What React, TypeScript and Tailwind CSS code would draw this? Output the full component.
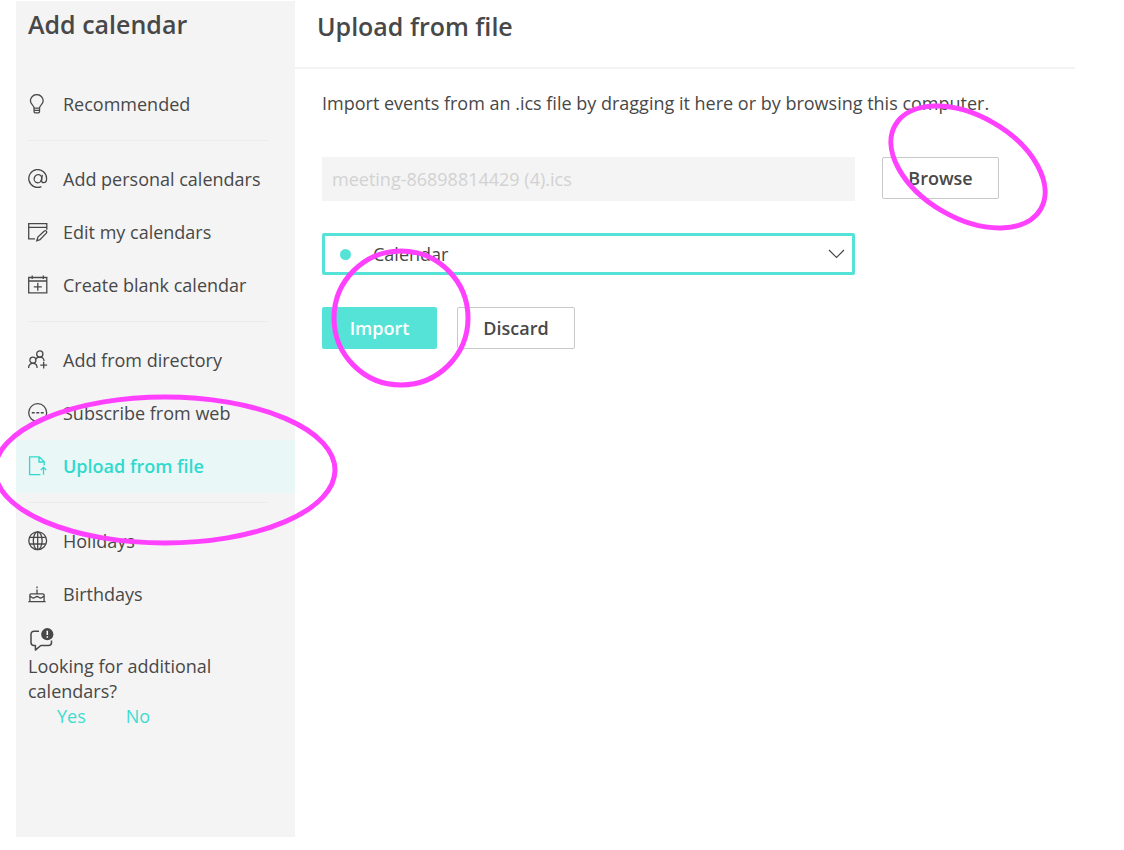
import React, { useState } from 'react';

type NavItem = { id: string; label: string; icon: React.ReactNode };

const Icon: React.FC<{ children: React.ReactNode }> = ({ children }) => (
  <svg className="w-5 h-5 shrink-0 mb-[2px]" viewBox="0 0 20 20" fill="none" stroke="currentColor" strokeWidth="1.3" aria-hidden="true">
    {children}
  </svg>
);

const groups: NavItem[][] = [
  [
    {
      id: 'recommended',
      label: 'Recommended',
      icon: (
        <Icon>
          <path d="M6.1 14.2C6.1 11.2 2.4 10.4 2.4 6.8a6.4 6.2 0 0 1 12.8 0c0 3.6-3.7 4.4-3.7 7.4z" />
          <path d="M6.1 14.2v3.6a1 1 0 0 0 1 1h3.4a1 1 0 0 0 1-1v-3.6M6.1 16.4h5.4" />
        </Icon>
      ),
    },
  ],
  [
    {
      id: 'personal',
      label: 'Add personal calendars',
      icon: (
        <Icon>
          <path d="M13.4 17.6A8.9 8.9 0 1 1 18.6 9.4c0 2.7-1.2 4.2-2.9 4.2-1.5 0-2.3-.9-2.1-2.4l.7-5.4" />
          <ellipse cx="9.9" cy="9.7" rx="3.7" ry="4.1" transform="rotate(15 9.9 9.7)" />
        </Icon>
      ),
    },
    {
      id: 'edit',
      label: 'Edit my calendars',
      icon: (
        <Icon>
          <path d="M7 16.9H.7V1.7h18.1v6M.7 5.4h18.1" />
          <path d="M8.8 18.8l1.1-3.8 6.4-6c1.5-1.1 3.2.7 2 2.1L12 17.6z" />
        </Icon>
      ),
    },
    {
      id: 'blank',
      label: 'Create blank calendar',
      icon: (
        <Icon>
          <path d="M.7 2.5h18.1v15.4H.7zM.7 6h18.1M4.2 .5v3.4M15.3 .5v3.4M9.8 7.8v8M5.8 11.8h8" />
        </Icon>
      ),
    },
  ],
  [
    {
      id: 'directory',
      label: 'Add from directory',
      icon: (
        <Icon>
          <circle cx="11.8" cy="4" r="3.1" />
          <circle cx="4.9" cy="10.2" r="3" />
          <path d="M.6 17.9c0-2.8 1.9-4.6 4.3-4.6s4.2 1.8 4.2 4.6M7.6 9.2c.8-1.3 2.3-2.1 4.2-2.1 2.4 0 4 1.6 4.3 3.9M15.7 11.8v6.8M12.3 15.2h6.8" />
        </Icon>
      ),
    },
    {
      id: 'subscribe',
      label: 'Subscribe from web',
      icon: (
        <Icon>
          <circle cx="9.7" cy="9.7" r="9" />
          <path d="M3.8 9.7h2.9M8.3 9.7h2.9M12.8 9.7h2.9" strokeWidth="1.6" />
        </Icon>
      ),
    },
    {
      id: 'upload',
      label: 'Upload from file',
      icon: (
        <Icon>
          <path d="M12.4 18.6H1.6V.8h9.6l5 5v3.6M11 .8v5.2h5.2M15.5 18.8v-7.4M12.8 14l2.7-2.7 2.7 2.7" />
        </Icon>
      ),
    },
  ],
  [
    {
      id: 'holidays',
      label: 'Holidays',
      icon: (
        <Icon>
          <circle cx="9.7" cy="9.7" r="8.9" />
          <ellipse cx="9.7" cy="9.7" rx="4.4" ry="8.9" />
          <path d="M9.7.8v17.8M1.6 6.4h16.2M1.6 13h16.2" />
        </Icon>
      ),
    },
    {
      id: 'birthdays',
      label: 'Birthdays',
      icon: (
        <Icon>
          <path d="M9 2.600v1.600M9 5.400v4.400M1.900 17.600v-6.600a1.200 1.200 0 0 1 1.200-1.200h11.800a1.200 1.200 0 0 1 1.200 1.200v6.600M.4 17.700h17.200" />
          <path d="M1.900 12.500c1.700 0 2 1.500 3.500 1.500s2.100-1.500 3.600-1.500 2.100 1.500 3.600 1.500 1.800-1.500 3.500-1.500" />
        </Icon>
      ),
    },
  ],
];

const App: React.FC = () => {
  const [active, setActive] = useState('upload');
  const [calendar, setCalendar] = useState('Calendar');

  return (
    <div className="flex min-h-screen overflow-hidden bg-white pt-px pb-[13px] pl-4 pr-[49px] font-['Open_Sans','Noto_Sans',sans-serif] text-[18px] text-[#484848]">
      <Sidebar active={active} onSelect={setActive} />

      <main className="flex-1 min-w-0">
        <header className="h-[68px] border-b-2 border-[#f3f3f3] pl-[22px] pt-2">
          <h1 className="text-[25px] leading-[34px] font-semibold">Upload from file</h1>
        </header>

        <div className="pl-[27px] pr-[76px] pt-[21px]">
          <p className="leading-[26px] whitespace-nowrap">Import events from an .ics file by dragging it here or by browsing this computer.</p>

          <div className="mt-[41px] flex items-start gap-[27px]">
            <input
              type="text"
              aria-label="Selected file"
              disabled
              value="meeting-86898814429 (4).ics"
              className="h-11 min-w-0 flex-1 bg-[#f4f4f4] px-[10px] text-[#d2d2d2]"
            />
            <div className="relative">
              <button type="button" className="h-[42px] w-[117px] rounded-xs border border-[#c8c8c8] bg-white pt-px font-semibold">Browse</button>
              <Ring className="-left-[4px] -top-[64px] h-[148px] w-[180px]" viewBox="0 0 180 148">
                <ellipse cx="90" cy="74" rx="84" ry="51" transform="rotate(30 90 74)" />
              </Ring>
            </div>
          </div>

          <div className="relative mt-8 mr-36">
            <span className="absolute left-[18px] top-4 size-[11px] rounded-full bg-[#55e3d8]" />
            <select
              aria-label="Calendar to import into"
              value={calendar}
              onChange={(e) => setCalendar(e.target.value)}
              className="h-[42px] w-full appearance-none rounded-xs border-3 border-[#55e3d8] bg-transparent pl-12 pr-10 outline-none"
            >
              <option>Calendar</option>
            </select>
            <svg className="pointer-events-none absolute right-[10px] top-4 h-[10px] w-[17px]" viewBox="0 0 17 10" fill="none" stroke="currentColor" strokeWidth="1.2">
              <path d="M1 1l7.5 7.5L16 1" />
            </svg>
          </div>

          <div className="mt-8 flex gap-5">
            <div className="relative">
              <button type="button" className="h-[42px] w-[115px] rounded-xs bg-[#55e3d8] pt-px font-semibold text-white">Import</button>
              <Ring className="left-[9px] -top-[59px] z-10 size-[140px]" viewBox="0 0 140 140">
                <circle cx="70" cy="70" r="67" />
              </Ring>
            </div>
            <button type="button" className="h-[42px] w-[118px] rounded-xs border border-[#c8c8c8] bg-white pt-px font-semibold">Discard</button>
          </div>
        </div>
      </main>
    </div>
  );
};

const Sidebar: React.FC<{ active: string; onSelect: (id: string) => void }> = ({ active, onSelect }) => (
  <aside className="w-[279px] shrink-0 bg-[#f4f4f4]">
    <h2 className="px-3 pt-[6px] text-[25px] leading-[34px] font-semibold">Add calendar</h2>

    <nav className="mt-[37px]">
      {groups.map((items, i) => (
        <div key={i}>
          {i > 0 && <hr className="ml-3 mr-[27px] mt-[9px] mb-3 border-t border-[#ebebeb]" />}
          {items.map((item) => (
            <div key={item.id} className="relative">
              <button
                type="button"
                onClick={() => onSelect(item.id)}
                className={`flex h-[53px] w-full items-center gap-[15px] px-3 text-left ${
                  item.id === active ? 'bg-[#e9f7f7] font-semibold text-[#2fdacd]' : ''
                }`}
              >
                {item.icon}
                {item.label}
              </button>
              {item.id === 'upload' && (
                <Ring className="-left-[24px] -top-[46px] z-10 h-[152px] w-[346px]" viewBox="0 0 346 152">
                  <ellipse cx="173" cy="76" rx="170" ry="73" />
                </Ring>
              )}
            </div>
          ))}
        </div>
      ))}
    </nav>

    <div className="px-3 pt-[7px]">
      <svg className="size-[26px]" viewBox="0 0 26 26" fill="none" aria-hidden="true">
        <path d="M11 3.2H6a3 3 0 0 0-3 3v8.3a3 3 0 0 0 3 3h1.4v4.6l5.4-4.6h7.7a3 3 0 0 0 3-3v-2" stroke="currentColor" strokeWidth="1.5" strokeLinejoin="round" />
        <circle cx="19.3" cy="6.2" r="6.1" fill="currentColor" />
        <path d="M19.3 2.7v4.2M19.3 8.2v1.5" stroke="white" strokeWidth="1.5" />
      </svg>
      <p className="leading-[25px]">Looking for additional calendars?</p>
      <div className="flex gap-10 pl-[29px] leading-[25px] text-[#3fdcd0]">
        <button type="button">Yes</button>
        <button type="button">No</button>
      </div>
    </div>
  </aside>
);

// Hand-drawn style marker laid over a control
const Ring: React.FC<{ className: string; viewBox: string; children: React.ReactNode }> = ({ className, viewBox, children }) => (
  <svg className={`pointer-events-none absolute max-w-none ${className}`} viewBox={viewBox} fill="none" stroke="#ff40ff" strokeWidth="5" aria-hidden="true">
    {children}
  </svg>
);

export default App;
